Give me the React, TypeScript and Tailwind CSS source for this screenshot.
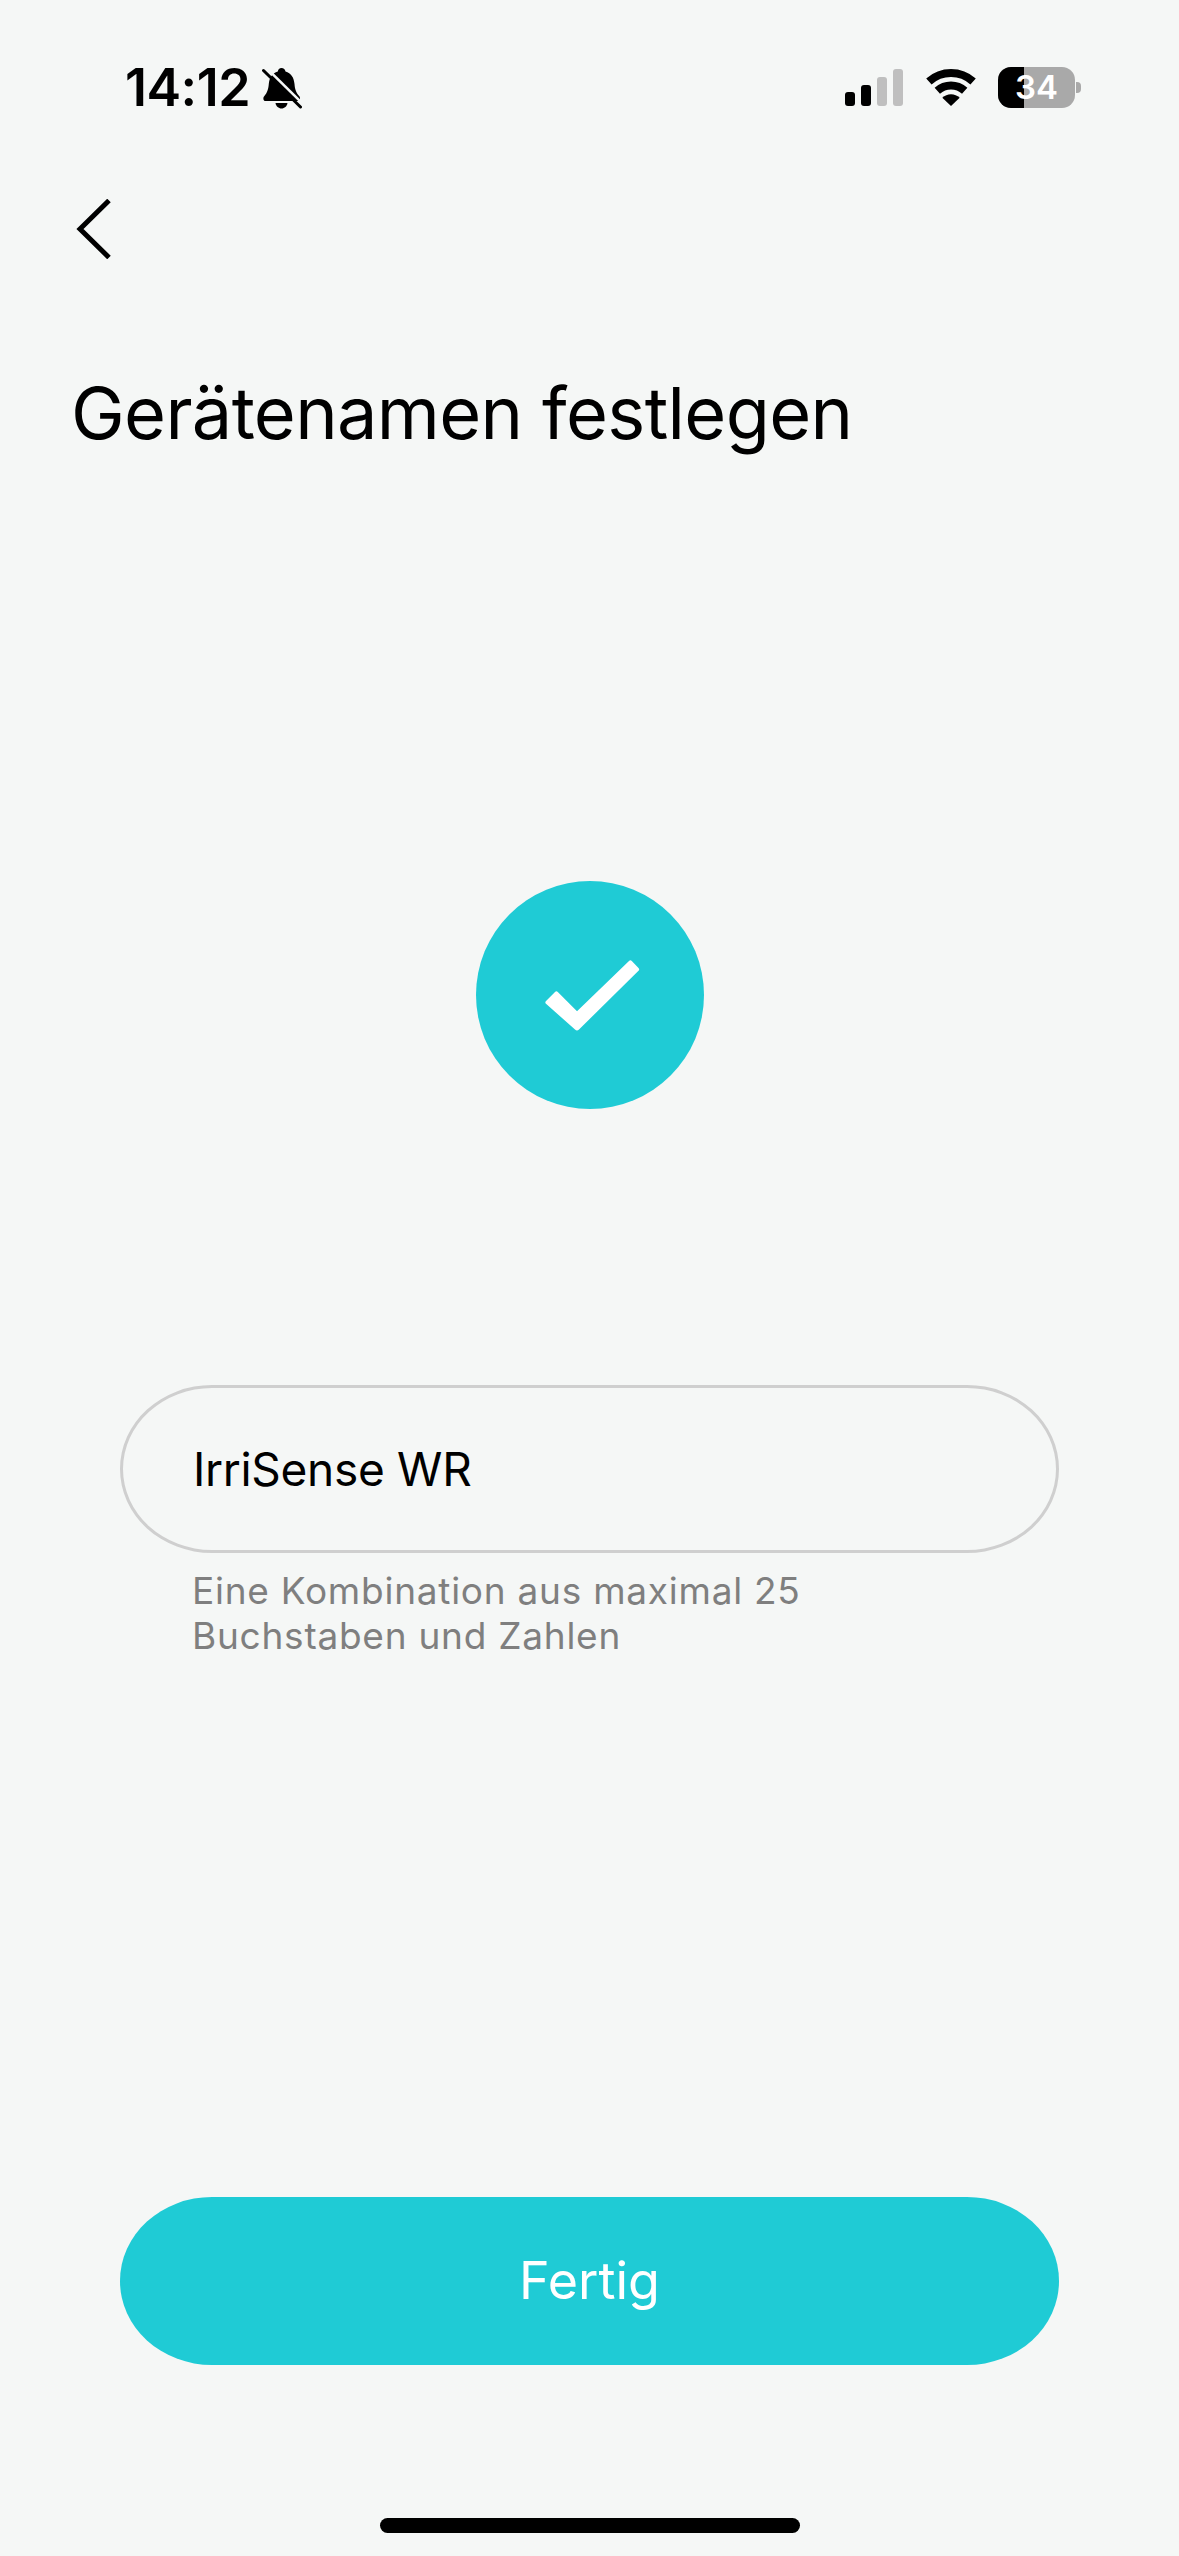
function BellSlash() {
  return (
    <svg width="40" height="42" viewBox="0 0 40 42" className="ml-[12px]">
      <path
        d="M19.5 1c2.2 0 3.600 1.500 4 3.400 5.600 1.500 8.400 6 9 12.500.4 5.500 1.600 8.500 5 12.500.9 1.100.8 4.600-1.500 4.600H3.500c-2.300 0-2.600-3.200-1.500-4.600 3.300-4 4.300-7 4.800-12.500.6-6.500 3.500-11 9-12.500.4-1.900 1.500-3.400 3.700-3.400z"
        fill="#000"
      />
      <path d="M13.500 36h12c-.5 3.200-3 5.500-6 5.500s-5.500-2.300-6-5.500z" fill="#000" />
      <path d="M3.500 0 42 38" stroke="#f5f7f6" strokeWidth="2.500" />
      <path d="M1.500 3.500 38.500 40" stroke="#000" strokeWidth="3" strokeLinecap="round" />
    </svg>
  );
}

function SignalBars() {
  return (
    <div className="flex items-end gap-[6px]">
      <div className="w-[10px] h-[14px] rounded-[3px] bg-black" />
      <div className="w-[10px] h-[21px] rounded-[3px] bg-black" />
      <div className="w-[10px] h-[29px] rounded-[3px] bg-[#bfbfbf]" />
      <div className="w-[10px] h-[37px] rounded-[3px] bg-[#bfbfbf]" />
    </div>
  );
}

function Wifi() {
  return (
    <svg width="50" height="37" viewBox="0 0 50 37">
      <path d="M2.900 12.500A33 33 0 0 1 47.100 12.500" fill="none" stroke="#000" strokeWidth="8" />
      <path d="M11.300 21.800A20.500 20.500 0 0 1 38.700 21.800" fill="none" stroke="#000" strokeWidth="8" />
      <path d="M25 37 16.300 28.700A12.500 12.500 0 0 1 33.700 28.700z" fill="#000" />
    </svg>
  );
}

function Battery() {
  return (
    <div className="flex items-center gap-[1px]">
      <div className="relative w-[77px] h-[41px] rounded-[13px] overflow-hidden bg-[#a9a9a9] flex items-center justify-center">
        <div className="absolute left-0 top-0 bottom-0 w-[26px] bg-black" />
        <span className="relative text-white font-semibold text-[33px] leading-none">34</span>
      </div>
      <div className="w-[5px] h-[11px] rounded-r-[4px] bg-[#a9a9a9]" />
    </div>
  );
}

export default function App() {
  return (
    <div className="w-[1179px] h-[2556px] bg-[#f5f7f6] flex flex-col font-['Inter',sans-serif] text-black overflow-hidden">
      {/* status bar */}
      <div className="flex items-center justify-between h-[41px] mt-[67px] pl-[125px] pr-[98px]">
        <div className="flex items-center">
          <span className="text-[52px] leading-none font-semibold tracking-[-0.5px]">14:12</span>
          <BellSlash />
        </div>
        <div className="flex items-center">
          <SignalBars />
          <div className="ml-[23px]">
            <Wifi />
          </div>
          <div className="ml-[22px]">
            <Battery />
          </div>
        </div>
      </div>

      {/* back */}
      <div className="mt-[91px] pl-[76px]">
        <svg width="36" height="60" viewBox="0 0 36 60" className="block">
          <path d="M33 1.500 4 30l29 28.500" fill="none" stroke="#000" strokeWidth="5" />
        </svg>
      </div>

      <h1 className="mt-[110px] ml-[71px] text-[72px] leading-[88px] font-normal tracking-[-0.65px]">Gerätenamen festlegen</h1>

      {/* success mark */}
      <div className="mt-[424px] self-center w-[228px] h-[228px] rounded-full bg-[#1fcbd5] flex items-center justify-center">
        <svg width="96" height="72" viewBox="0 0 96 72" className="ml-[4px]">
          <path
            d="M2 42 11 33a2 2 0 0 1 2.800 0L33 52.200 85 2a2 2 0 0 1 2.800 0L94.500 9a2 2 0 0 1 0 2.800L35 70.500a2.800 2.800 0 0 1-4 0L2 44.800a2 2 0 0 1 0-2.800z"
            fill="#fff"
          />
        </svg>
      </div>

      {/* name field */}
      <div className="mt-[276px] mx-[120px] h-[168px] rounded-[92px/84px] border-[3px] border-[#cfcfcf] flex items-center pl-[70px]">
        <span className="text-[46px] leading-[56px] tracking-[-0.3px]">IrriSense WR</span>
      </div>
      <p className="mt-[15px] ml-[192px] w-[680px] text-[37px] leading-[45px] tracking-[0.75px] text-[#7f7f7f]">
        Eine Kombination aus maximal 25 Buchstaben und Zahlen
      </p>

      {/* action */}
      <button className="mt-[539px] mx-[120px] h-[168px] rounded-[92px/84px] bg-[#1fcbd5] text-white text-[52px] leading-none flex items-center justify-center">
        Fertig
      </button>

      <div className="mt-[153px] self-center w-[420px] h-[15px] rounded-full bg-black" />
    </div>
  );
}
